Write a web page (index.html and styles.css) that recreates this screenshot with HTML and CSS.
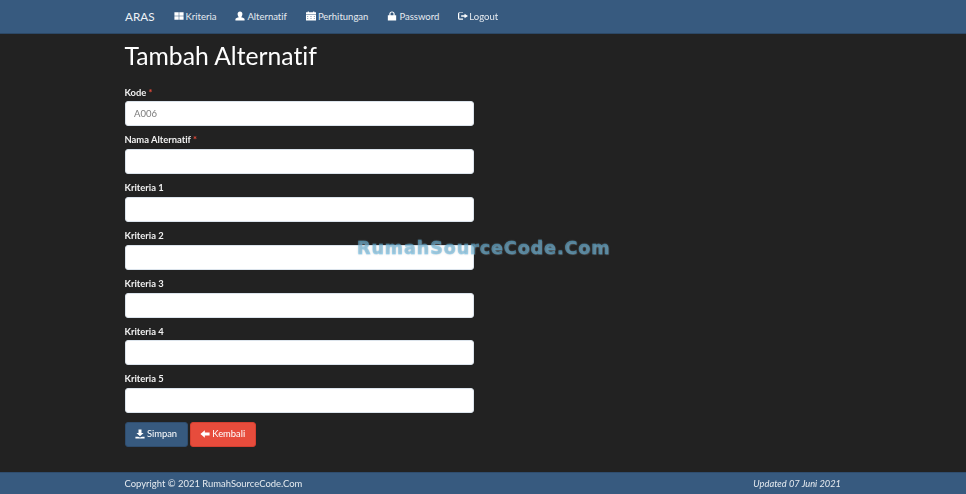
FILE: index.html
```html
<!DOCTYPE html>
<html lang="id">
<head>
<meta charset="utf-8">
<title>Tambah Alternatif</title>
<link rel="stylesheet" href="styles.css">
</head>
<body>
<nav class="navbar">
  <div class="wrap nav-row">
    <a class="brand">ARAS</a>
    <a class="nav-link"><svg class="ico" viewBox="0 0 12 12"><path d="M.5 1.500h5.200v4.200H.5zM6.300 1.500h5.200v4.200H6.300zM.5 6.300h5.200v4.200H.5zM6.300 6.300h5.200v4.200H6.300z"/></svg>Kriteria</a>
    <a class="nav-link"><svg class="ico" viewBox="0 0 12 12"><path d="M6 .5c1.800 0 2.900 1.300 2.900 3.100S7.900 7 7.400 7.500c1.500.6 4.100 1 4.100 2.500v1.500H.5V10c0-1.500 2.600-1.900 4.100-2.500C4.100 7 3.100 5.400 3.100 3.600S4.200.5 6 .5z"/></svg>Alternatif</a>
    <a class="nav-link"><svg class="ico" viewBox="0 0 12 12"><path d="M0 1.500h2V.5h1.500v1h5V.5H10v1h2V4H0zM0 4.600h12v6.900H0zM1.200 6v.6h1.500V6zM5.200 6v.6h1.600V6zM9.300 6v.6h1.500V6zM1.200 8.500v.6h1.500v-.6zM5.200 8.500v.6h1.600v-.6zM9.300 8.500v.6h1.500v-.6z" fill-rule="evenodd"/></svg>Perhitungan</a>
    <a class="nav-link"><svg class="ico" viewBox="0 0 12 12"><path d="M2.800 5V3.500C2.800 1.700 4.200.5 6 .5s3.200 1.200 3.200 3V5h1.800v6.500H1V5zM4.200 5h3.600V3.500C7.800 2.500 7 1.900 6 1.900s-1.800.6-1.800 1.600z" fill-rule="evenodd"/></svg>Password</a>
    <a class="nav-link nav-tight"><svg class="ico" viewBox="0 0 12 12"><path d="M6 2H2.200Q1.500 2 1.500 2.700v5.600q0 .7.7.7H6v1.500H1.800Q0 10.500 0 8.700V3.300Q0 1.500 1.800 1.500H6zM7.800 3.200 12 6 7.800 8.800V7H3.800V5h4z"/></svg>Logout</a>
  </div>
</nav>

<main class="wrap content">
  <h1 class="title">Tambah Alternatif</h1>
  <form class="form">
    <div class="group"><label class="label">Kode <span class="req">*</span></label><input class="field" type="text" value="A006"></div>
    <div class="group"><label class="label">Nama Alternatif <span class="req">*</span></label><input class="field" type="text"></div>
    <div class="group"><label class="label">Kriteria 1</label><input class="field" type="text"></div>
    <div class="group"><label class="label">Kriteria 2</label><input class="field" type="text"></div>
    <div class="group"><label class="label">Kriteria 3</label><input class="field" type="text"></div>
    <div class="group"><label class="label">Kriteria 4</label><input class="field" type="text"></div>
    <div class="group"><label class="label">Kriteria 5</label><input class="field" type="text"></div>
    <div class="actions">
      <button class="btn btn-primary" type="button"><svg class="ico" viewBox="0 0 12 12"><path d="M4.200.5h3.600v4.200h2.500L6 8.800 1.700 4.700h2.500zM.5 9.300h3.200L6 10.200l2.300-.9h3.200v2.200H.5z"/></svg>Simpan</button>
      <button class="btn btn-danger" type="button"><svg class="ico" viewBox="0 0 12 12"><path d="M5.800 1.500v2.800H11.500v3.400H5.800v2.800L.5 6z"/></svg>Kembali</button>
    </div>
  </form>
</main>

<footer class="footer">
  <div class="wrap foot-row">
    <span>Copyright © 2021 RumahSourceCode.Com</span>
    <em class="updated">Updated 07 Juni 2021</em>
  </div>
</footer>

<div class="watermark">RumahSourceCode.Com</div>
</body>
</html>
```

FILE: styles.css
```css
* {
  box-sizing: border-box;
}

html,
body {
  margin: 0;
  height: 494px;
  overflow: hidden;
}

body {
  position: relative;
  display: flex;
  flex-direction: column;
  background: #222222;
  color: #ffffff;
  font-family: Lato, "Liberation Sans", sans-serif;
  font-size: 9.4px;
  font-variant-ligatures: none;
  filter: blur(0.35px);
}

.wrap {
  width: 716.500px;
  margin-left: 124.500px;
}

.navbar {
  height: 34px;
  background: #375a7f;
  border-bottom: 1px solid #2c4866;
  flex: none;
}

.nav-row {
  display: flex;
  align-items: center;
  height: 32px;
}

.brand {
  padding-left: 0.500px;
  font-size: 11.700px;
  color: #eef2f6;
  margin-right: 19px;
}

.nav-link {
  display: flex;
  align-items: center;
  margin-right: 19px;
  color: #e6ebf0;
  font-size: 9.500px;
}

.ico {
  width: 10px;
  height: 10px;
  fill: #ffffff;
  margin-right: 2px;
  flex: none;
}

.nav-tight .ico {
  margin-right: 1px;
}

.content {
  flex: 1;
}

.title {
  margin: 8px 0 0;
  height: 43.700px;
  font-size: 24.700px;
  font-weight: 400;
  line-height: 27px;
  color: #ffffff;
}

.form {
  width: 349px;
}

.group {
  margin-bottom: 7px;
}

.label {
  display: block;
  height: 13px;
  margin-bottom: 2.800px;
  font-size: 9.400px;
  font-weight: 700;
  line-height: 14.500px;
  color: #f2f2f2;
}

.req {
  color: #e74c3c;
}

.field {
  display: block;
  width: 100%;
  height: 25px;
  padding: 0 8.500px;
  background: #ffffff;
  border: 1px solid #dce4ec;
  border-radius: 3px;
  color: #7b7b7b;
  font-family: inherit;
  font-size: 9.500px;
}

.actions {
  display: flex;
  gap: 2px;
  margin-top: 9px;
}

.btn {
  display: flex;
  align-items: center;
  justify-content: center;
  height: 25px;
  padding: 0 0 2px;
  border-radius: 3px;
  color: #ffffff;
  font-family: inherit;
  font-size: 9.400px;
}

.btn-primary {
  width: 63px;
  background: #375a7f;
  border: 1px solid #2f4d6e;
}

.btn-danger {
  width: 66.500px;
  background: #e74c3c;
  border: 1px solid #d43f30;
}

.footer {
  flex: none;
  height: 22px;
  background: #375a7f;
  border-top: 1px solid #2f4d6e;
}

.foot-row {
  display: flex;
  justify-content: space-between;
  align-items: center;
  height: 20px;
  color: #e6ebf0;
  font-size: 9.450px;
}

.updated {
  font-size: 9.300px;
}

.watermark {
  position: absolute;
  left: 357px;
  top: 237px;
  font-family: "DejaVu Sans", sans-serif;
  font-size: 17.500px;
  font-weight: 700;
  line-height: 23px;
  letter-spacing: 0.950px;
  color: rgba(90, 190, 240, 0.4);
  -webkit-text-stroke: 0.8px rgba(90, 190, 240, 0.35);
  text-shadow: 0 0 2px rgba(140, 140, 140, 0.6), 1px 1px 1px rgba(255, 255, 255, 0.15);
}
```
